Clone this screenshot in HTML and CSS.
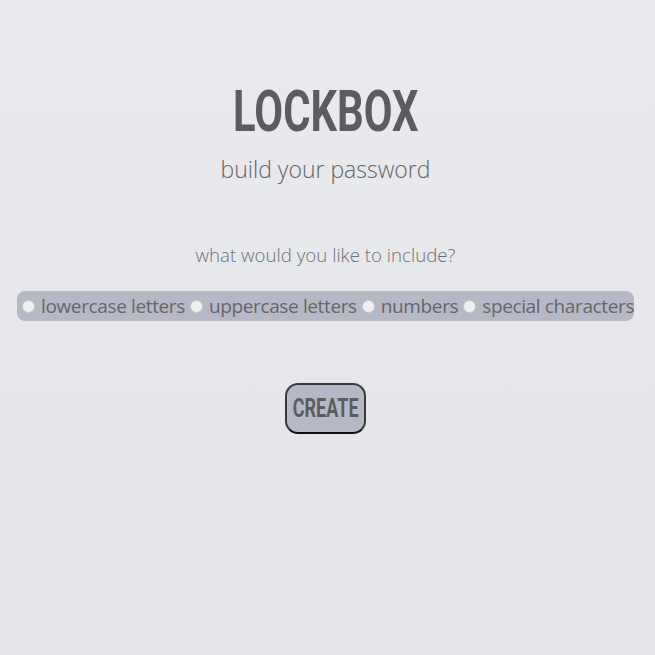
FILE: index.html
```html
<!DOCTYPE html>
<html>
<head>
<meta charset="utf-8">
<link rel="stylesheet" href="styles.css">
</head>
<body>
<main class="page">
  <h1 class="title"><span class="squeeze">LOCKBOX</span></h1>
  <h2 class="subtitle">build your password</h2>
  <p class="question">what would you like to include?</p>
  <div class="options">
    <label class="option"><input type="radio" name="lower"><span>lowercase letters</span></label>
    <label class="option"><input type="radio" name="upper"><span>uppercase letters</span></label>
    <label class="option"><input type="radio" name="num"><span>numbers</span></label>
    <label class="option"><input type="radio" name="special"><span>special characters</span></label>
  </div>
  <button class="create"><span class="squeeze">CREATE</span></button>
</main>
</body>
</html>
```
FILE: styles.css
```css
html, body {
  margin: 0;
  height: 100%;
}
body {
  background: linear-gradient(#e9eaed, #e5e5e9);
  font-family: "Open Sans", "DejaVu Sans", sans-serif;
}
.page {
  display: flex;
  flex-direction: column;
  align-items: center;
  padding: 82px 4px 0 0;
}
.squeeze {
  display: inline-block;
  flex-shrink: 0;
  transform: scaleX(0.72);
}
.title {
  margin: 0;
  font-family: Roboto, sans-serif;
  font-weight: 700;
  font-size: 58px;
  line-height: 58px;
  color: #5b5c5f;
  white-space: nowrap;
}
.subtitle {
  margin: 14px 0 0;
  font-weight: 300;
  font-size: 23px;
  line-height: 30px;
  color: #63646b;
}
.question {
  margin: 59px 0 0;
  font-weight: 300;
  font-size: 18.7px;
  line-height: 24px;
  color: #6e6f77;
}
.options {
  margin-top: 24px;
  display: flex;
  align-items: center;
  width: 617px;
  height: 30px;
  box-sizing: border-box;
  padding-left: 5px;
  background: #b7b8c6;
  border-radius: 8px;
}
.option {
  display: flex;
  align-items: center;
  font-size: 19px;
  color: #64656b;
  letter-spacing: -0.37px;
  white-space: nowrap;
}
.option input {
  appearance: none;
  width: 13px;
  height: 13px;
  margin: 0 6px 0 0;
  border-radius: 50%;
  background: #f0f0f2;
  border: 1px solid #c9c9d1;
  box-sizing: border-box;
}
.option span {
  margin-right: 5px;
}
.create {
  margin-top: 62px;
  width: 81px;
  height: 51px;
  display: flex;
  align-items: center;
  justify-content: center;
  background: #b7b8c6;
  border: 2px solid #3a3a3c;
  border-bottom-color: #111;
  border-radius: 13px;
  font-family: Roboto, sans-serif;
  font-weight: 700;
  font-size: 25px;
  color: #5b5c5f;
  padding: 0;
  white-space: nowrap;
}
```
